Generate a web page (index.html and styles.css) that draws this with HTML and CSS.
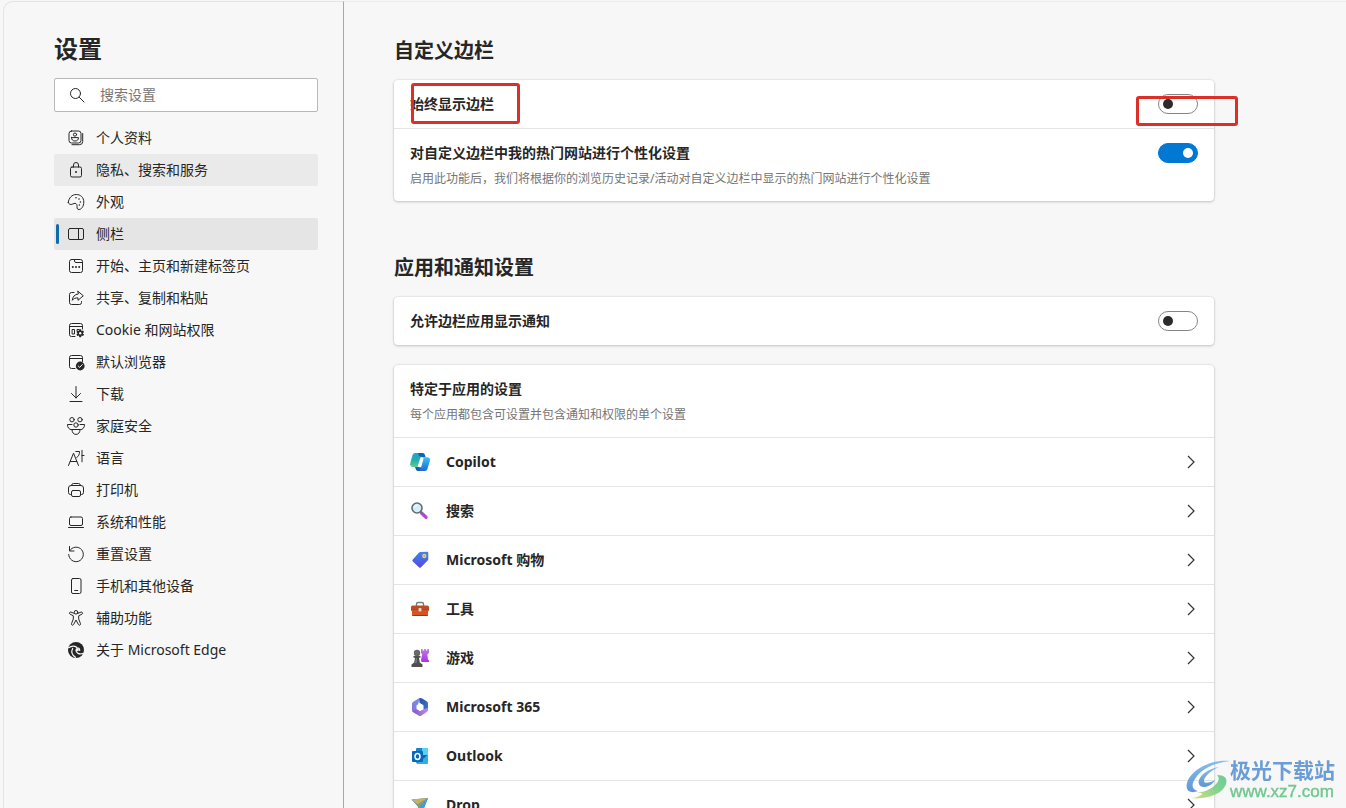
FILE: index.html
```html
<!DOCTYPE html>
<html lang="zh-CN">
<head>
<meta charset="utf-8">
<title>设置</title>
<link rel="stylesheet" href="styles.css">
</head>
<body>
<div class="shell">
  <aside class="sidebar">
    <h1 class="title">设置</h1>
    <label class="search">
      <svg class="icon" viewBox="0 0 16 16"><circle cx="6.5" cy="6.5" r="5"/><path d="M10.2 10.2 15 15"/></svg>
      <input class="search-input" type="search" placeholder="搜索设置" aria-label="搜索设置">
    </label>
    <nav class="nav">
      <a class="nav-item" href="#"><svg class="icon" viewBox="0 0 16 16"><rect x="1" y="1" width="12" height="12" rx="2.5"/><circle cx="7" cy="4.600" r="1.600"/><path d="M3.500 7.600h7c0 2.200-1.300 3.400-3.500 3.400s-3.500-1.200-3.500-3.400zM14.700 3.500v8q0 3.200-3.200 3.200H4"/></svg>个人资料</a>
      <a class="nav-item hover" href="#"><svg class="icon" viewBox="0 0 16 16"><rect x="2.500" y="5" width="11" height="10" rx="1.500"/><path d="M5.500 5V3a2.500 2.500 0 0 1 5 0v2"/><circle class="solid" cx="8" cy="10" r="1"/></svg>隐私、搜索和服务</a>
      <a class="nav-item" href="#"><svg class="icon" viewBox="0 0 16 16"><path d="M.3 8.300C.8 3.800 4 .5 8.300.5c4.300 0 7.500 3 7.500 7.500 0 4.500-2.500 7.500-4.800 7.500-2.500 0-1.900-2.300-2-4-.1-1.800-1.500-2.500-3-2-1.700.6-2.400 1.300-3.900.8C.8 9.800.3 9.200.3 8.300z"/><g class="solid"><circle cx="8" cy="3.700" r=".8"/><circle cx="11" cy="5" r=".8"/><circle cx="12.400" cy="8" r=".8"/><circle cx="11.400" cy="11" r=".8"/></g></svg>外观</a>
      <a class="nav-item active" href="#" aria-current="page"><svg class="icon" viewBox="0 0 16 16"><rect x=".5" y="2.500" width="15" height="11" rx="1.500"/><path d="M10.500 2.500v11"/></svg>侧栏</a>
      <a class="nav-item" href="#"><svg class="icon" viewBox="0 0 16 16"><rect x="1.500" y="1.500" width="13" height="13" rx="2"/><path d="M6.500 1.500v1.500q0 1.500 1.500 1.500h6.500"/><g class="solid"><circle cx="4.800" cy="9" r="1"/><circle cx="8" cy="9" r="1"/><circle cx="11.200" cy="9" r="1"/></g></svg>开始、主页和新建标签页</a>
      <a class="nav-item" href="#"><svg class="icon" viewBox="0 0 16 16"><path d="M6 2.500H3.500q-2 0-2 2v8q0 2 2 2h8q2 0 2-2V11.500"/><path d="M10 1.300 15.300 5.800 10 10.300V7.900C7.300 7.800 5.500 8.600 4.300 10.300c.3-3.500 2.300-6 5.700-6.300z"/></svg>共享、复制和粘贴</a>
      <a class="nav-item" href="#"><svg class="icon" viewBox="0 0 16 16"><path d="M7 14.500H3.500q-2 0-2-2v-9q0-2 2-2h9q2 0 2 2V7M1.500 4.500h13"/><path d="M4.500 7.500h2v4.500h-2zM9 8.500v-1h2"/><path class="solid" d="M11.300 7.300h1.800l.4 1.700 1.600-.5.900 1.500-1.200 1.200 1.200 1.200-.9 1.600-1.600-.5-.4 1.700h-1.800l-.4-1.700-1.600.5-.9-1.600 1.200-1.200-1.200-1.200.9-1.500 1.600.5z"/><circle class="knockout" cx="12.200" cy="11.300" r="1.200"/></svg>Cookie 和网站权限</a>
      <a class="nav-item" href="#"><svg class="icon" viewBox="0 0 16 16"><path d="M7 14.500H3.500q-2 0-2-2v-9q0-2 2-2h9q2 0 2 2V7.500M1.500 4.500h13"/><circle class="solid" cx="12.200" cy="12" r="4.400"/><path class="knockline" d="m10.200 12 1.500 1.400 2.600-2.800"/></svg>默认浏览器</a>
      <a class="nav-item" href="#"><svg class="icon" viewBox="0 0 16 16"><path d="M8 .5v11.500M3.500 7.500 8 12l4.500-4.500M2 15.500h12"/></svg>下载</a>
      <a class="nav-item" href="#"><svg class="icon wide" viewBox="0 0 18 18"><circle cx="5" cy="2.700" r="2.200"/><circle cx="13" cy="2.700" r="2.200"/><circle cx="9" cy="8" r="2.200"/><path d="M4.500 12.700C2 12.500.5 10.700.5 7.500h4.500M13.500 12.700c2.500-.2 4-2 4-5.200H13M5 12.500h8c0 3-1.500 4.900-4 4.900s-4-1.900-4-4.900z"/></svg>家庭安全</a>
      <a class="nav-item" href="#"><svg class="icon" viewBox="0 0 16 16"><path d="M.5 15.500 5.500 3.200l5 12.300M2.300 11.500h6.500M7.800 1.500h3.700c0 3-.8 4.700-2.800 6M14 .3v11.500M14 5.500h2"/></svg>语言</a>
      <a class="nav-item" href="#"><svg class="icon" viewBox="0 0 16 16"><path d="M3.500 3.500q0-2 2-2h5q2 0 2 2M3.500 12.500h-1q-2 0-2-2V6q0-2.500 2.500-2.500h10q2.500 0 2.500 2.500v4.500q0 2-2 2h-1"/><rect x="3.500" y="8.500" width="9" height="6" rx="1.500"/></svg>打印机</a>
      <a class="nav-item" href="#"><svg class="icon" viewBox="0 0 16 16"><rect x="1.500" y="3" width="13" height="8.500" rx="1.500"/><path d="M.5 13.500h15"/></svg>系统和性能</a>
      <a class="nav-item" href="#"><svg class="icon" viewBox="0 0 16 16"><path d="M1.500.5v4.500H6M1.700 4.700A7.300 7.300 0 1 1 .7 8.500"/></svg>重置设置</a>
      <a class="nav-item" href="#"><svg class="icon" viewBox="0 0 16 16"><rect x="3.500" y=".5" width="9.500" height="15" rx="1.500"/><path d="M6.700 12.500h3"/></svg>手机和其他设备</a>
      <a class="nav-item" href="#"><svg class="icon" viewBox="0 0 16 16"><circle cx="8" cy="2.300" r="1.800"/><path d="M6.300 3.500 3 2.100c-1.400-.5-2.200 1.300-1 2L5.300 5.800V9L3.500 13.700c-.4 1.500 1.500 2.100 2.100.8L8 10l2.400 4.500c.6 1.300 2.500.7 2.100-.8L10.700 9V5.800L14 4.100c1.200-.7.4-2.500-1-2L9.700 3.500"/></svg>辅助功能</a>
      <a class="nav-item" href="#"><svg class="icon" viewBox="0 0 16 16"><circle class="solid" cx="8" cy="8" r="8"/><path class="swirl" d="M.5 5.700C3.500 3.700 6.500 3.700 8.700 5.200M4.700 6.500C3 9.500 4 13 7.500 15.300M8.500 5.800c2-.3 3.200.8 3.200 2.600M8 8c-.3 3 3.200 5 7.300 3.200"/><circle class="knockout" cx="9.300" cy="7.700" r="1.600"/></svg>关于 Microsoft Edge</a>
    </nav>
  </aside>

  <main class="main">
    <section class="section">
      <h2 class="heading">自定义边栏</h2>
      <div class="card">
        <div class="row marked">
          <label class="row-title" for="always">始终显示边栏</label>
          <input class="switch" id="always" type="checkbox" role="switch">
          <span class="mark mark-label"></span>
          <span class="mark mark-switch"></span>
        </div>
        <div class="row">
          <div class="row-text">
            <label class="row-title" for="personal">对自定义边栏中我的热门网站进行个性化设置</label>
            <p class="desc">启用此功能后，我们将根据你的浏览历史记录/活动对自定义边栏中显示的热门网站进行个性化设置</p>
          </div>
          <input class="switch" id="personal" type="checkbox" role="switch" checked>
        </div>
      </div>
    </section>

    <section class="section">
      <h2 class="heading">应用和通知设置</h2>
      <div class="card">
        <div class="row">
          <label class="row-title" for="notify">允许边栏应用显示通知</label>
          <input class="switch" id="notify" type="checkbox" role="switch">
        </div>
      </div>
      <div class="card">
        <div class="row">
          <div class="row-text">
            <h3 class="row-title">特定于应用的设置</h3>
            <p class="desc">每个应用都包含可设置并包含通知和权限的单个设置</p>
          </div>
        </div>
        <a class="row app" href="#">
          <svg class="app-icon" viewBox="0 0 20 20"><defs><linearGradient id="c1" x1="0" y1="0" x2="0" y2="1"><stop offset="0" stop-color="#2a9fd8"/><stop offset=".5" stop-color="#1fb0a8"/><stop offset="1" stop-color="#5fd08a"/></linearGradient><linearGradient id="c2" x1="0" y1="0" x2="0" y2="1"><stop offset="0" stop-color="#36c5ee"/><stop offset="1" stop-color="#1c68dc"/></linearGradient></defs><path fill="url(#c1)" d="M5.500 1h7.200L9.300 13c-.5 1.400-1.200 2-2.600 2H3C.8 15-.2 13.500.3 11.300L2.400 3.500C2.900 1.800 3.800 1 5.500 1z"/><path fill="#1261ba" d="M8 1h4.500c1.500 0 2 .8 2.500 2.300l.6 2h-3.300L9 4zM5 15h3l4 .5-1.800 3.500H8.500c-1.600 0-2.300-.6-2.700-1.800z"/><path fill="url(#c2)" d="M13 5.200h4.200c2.200 0 3.200 1.500 2.600 3.700l-2.200 7.600c-.5 1.700-1.400 2.500-3.100 2.500H8.800c1-.3 1.500-1 1.900-2.300l2.600-9.200c.3-1-.1-1.600-.3-2.300z"/><path fill="#fff" d="M10.500 5.400h2.300L9.700 14.800H7.500z"/></svg>
          <span class="app-name">Copilot</span><svg class="chevron" viewBox="0 0 8 14"><path d="m1 1 6 6-6 6"/></svg></a>
        <a class="row app" href="#">
          <svg class="app-icon" viewBox="0 0 20 20"><path d="m11.500 12 4.500 4.300" stroke="#b844d4" stroke-width="3.300" stroke-linecap="round"/><path d="m10.200 10.500 2 2" stroke="#70757a" stroke-width="2"/><circle cx="7" cy="7" r="5" fill="#d5ecf9" stroke="#626b72" stroke-width="1.600"/><path d="M4.500 6.500a3 3 0 0 1 2.500-2" fill="none" stroke="#fff"/></svg>
          <span class="app-name">搜索</span><svg class="chevron" viewBox="0 0 8 14"><path d="m1 1 6 6-6 6"/></svg></a>
        <a class="row app" href="#">
          <svg class="app-icon" viewBox="0 0 20 20"><defs><linearGradient id="t1" x1="0" y1="0" x2="0" y2="1"><stop offset="0" stop-color="#3f86e5"/><stop offset="1" stop-color="#5546e8"/></linearGradient></defs><path fill="url(#t1)" d="m10.500 2 6.500-.2q1.300 0 1.300 1.300V9q0 .8-.6 1.400L11 17.200q-1 1-2 0L2.800 11.500q-1-1 0-2l6.300-7q.5-.5 1.400-.5z"/><circle cx="14.300" cy="6" r="2.200" fill="#e6ce84"/><circle cx="14.300" cy="6" r=".8" fill="#9d9a78"/></svg>
          <span class="app-name">Microsoft 购物</span><svg class="chevron" viewBox="0 0 8 14"><path d="m1 1 6 6-6 6"/></svg></a>
        <a class="row app" href="#">
          <svg class="app-icon" viewBox="0 0 20 20"><path d="M6.500 7V5q0-1.500 1.500-1.500h4q1.500 0 1.500 1.500v2" fill="none" stroke="#777c80" stroke-width="1.400"/><path fill="#c04a20" d="M2.500 6.500h15q1.500 0 1.500 1.500v3.500H1V8q0-1.500 1.500-1.500z"/><path fill="#d9531f" d="M2 11.500h16V16q0 1-1 1H3q-1 0-1-1z"/><path fill="#9c3512" d="M1 10.700h18v.8H1zM2.500 16h15v1h-15z"/><rect x="8.500" y="9" width="3" height="3.500" rx="1" fill="#e8d5cb"/></svg>
          <span class="app-name">工具</span><svg class="chevron" viewBox="0 0 8 14"><path d="m1 1 6 6-6 6"/></svg></a>
        <a class="row app" href="#">
          <svg class="app-icon" viewBox="0 0 20 20"><defs><linearGradient id="g1" x1="0" y1="0" x2="0" y2="1"><stop offset="0" stop-color="#c07be0"/><stop offset="1" stop-color="#ad2fe8"/></linearGradient></defs><path fill="url(#g1)" d="M11 1h1.600v1.500h1.500V1h1.700v1.500h1.500V1H19v4l-1.700 1.300.7 5.200 1 1V14h-7.500l-.5-2 1.200-5.700L11 5z"/><circle cx="7" cy="5" r="3.200" fill="#666668"/><path fill="#4f4f51" d="M3.500 8h7v1.700H9l.8 4.800 2.700 2V19h-11v-2.500l2.700-2L5 9.700H3.500z"/><path fill="#77777a" d="M5.200 4.500 6.500 3.300v2zM5.800 10h1.300l-.3 5H5z"/></svg>
          <span class="app-name">游戏</span><svg class="chevron" viewBox="0 0 8 14"><path d="m1 1 6 6-6 6"/></svg></a>
        <a class="row app" href="#">
          <svg class="app-icon" viewBox="0 0 20 20"><defs><linearGradient id="m1" x1="1" y1="0" x2="0" y2="1"><stop offset="0" stop-color="#6d9be8"/><stop offset="1" stop-color="#8a72d8"/></linearGradient><linearGradient id="m2" x1="0" y1="0" x2="1" y2="1"><stop offset="0" stop-color="#2f4fa0"/><stop offset="1" stop-color="#3f78d0"/></linearGradient><linearGradient id="m3" x1="0" y1="0" x2="1" y2="0"><stop offset="0" stop-color="#7a58c4"/><stop offset="1" stop-color="#c48ae6"/></linearGradient></defs><path fill="url(#m1)" d="M11.500 1 9.300 3.200 8 7.500l-1.300 1v5.300L2.800 15Q2 14.300 2 13V7q0-1.500 1.300-2.300L8.500 1.500Q9.800.9 11.500 1z"/><path fill="url(#m2)" d="M9.300 1.200q1.500-.5 2.900.3l4.500 2.800Q18 5.200 18 6.800v6q0 1-1 1.500l-3.700-2.400V8.300L9.500 6z"/><path fill="url(#m3)" d="M2.500 13.500q.5.500 1.500 0l3-1.600 3.300 2.100 3-1.800L17.800 11v2q0 1.500-1.300 2.300L11.500 18.400q-1.500 1-3 0l-5-3q-1-.7-1-1.900z"/><path fill="#fff" d="m10 6.200 3.300 2v3.700L10 14l-3.300-2V8.300z"/></svg>
          <span class="app-name">Microsoft 365</span><svg class="chevron" viewBox="0 0 8 14"><path d="m1 1 6 6-6 6"/></svg></a>
        <a class="row app" href="#">
          <svg class="app-icon" viewBox="0 0 20 20"><rect x="6" y="2" width="12" height="15" rx="1" fill="#1684cf"/><path fill="#35b8ee" d="M6 6h6v5H6z"/><path fill="#5ad2f8" d="M12 2h5q1 0 1 1v8l-6-1z"/><path fill="#1262ad" d="M12 9h6l-6 4z"/><path fill="#35aee7" d="m18 9.500V17q0 1-1 1H6z"/><rect x="2" y="5" width="11" height="11" rx="1" fill="#0869b7"/><ellipse cx="7.500" cy="10.500" rx="2.500" ry="2.900" fill="none" stroke="#fff" stroke-width="1.500"/></svg>
          <span class="app-name">Outlook</span><svg class="chevron" viewBox="0 0 8 14"><path d="m1 1 6 6-6 6"/></svg></a>
        <a class="row app" href="#">
          <svg class="app-icon" viewBox="0 0 20 20"><path fill="#2e87dc" d="M1.500 4.500 18 3l-6 15-3.500-6z"/><path fill="#ccb15b" d="M1.500 4.500 18 3 7.500 9.500z"/><path fill="#8a9f68" d="M18 3 7.500 9.500l1 6z"/><path fill="#3f9ae8" d="m18 3-6 15-2.700-6z"/></svg>
          <span class="app-name">Drop</span><svg class="chevron" viewBox="0 0 8 14"><path d="m1 1 6 6-6 6"/></svg></a>
      </div>
    </section>
  </main>
</div>

<div class="watermark">
  <svg class="wm-logo" viewBox="0 0 44 40"><defs><linearGradient id="w1" x1="0" y1="0" x2="0" y2="1"><stop offset="0" stop-color="#76b9e8"/><stop offset="1" stop-color="#4e8bd0"/></linearGradient><linearGradient id="w2" x1="0" y1="1" x2="1" y2="0"><stop offset="0" stop-color="#d0dc70"/><stop offset=".6" stop-color="#6fce85"/><stop offset="1" stop-color="#62c48c"/></linearGradient></defs><path fill="url(#w1)" d="M44 1C24-1 5 10 1 23c-2 8 4 11 11 8-6-1-7-6-3-12C14 10 26 3 44 1z"/><path fill="url(#w1)" d="M33 7C20 9 11 18 13 24c1 5 12 4 16-4-5 3-11 4-11 1 0-5 8-11 15-14z"/><path fill="url(#w2)" d="M5 38c15 2 32-4 35-14 2-6-2-9-9-9 3 3 2 7-3 11-6 5-12 6-17 7 5 0 7 1 4 2-3 2-6 3-10 3z"/></svg>
  <div class="wm-text"><span class="wm-name">极光下载站</span><span class="wm-url">www.xz7.com</span></div>
</div>
</body>
</html>
```

FILE: styles.css
```css
* { box-sizing: border-box; }

body {
  margin: 0;
  background: #f7f7f7;
  color: #262626;
  font: 14px/20px "Noto Sans", "Noto Sans CJK SC", sans-serif;
}

h1, h2, h3, p { margin: 0; }
a { color: inherit; text-decoration: none; }

.shell {
  display: flex;
  height: 100vh;
  overflow: hidden;
  padding: 1px 0 0 3px;
}

.sidebar {
  flex: 0 0 341px;
  padding: 31px 25px 0 50px;
  border: 1px solid #e4e4e4;
  border-right-color: #a8a8a8;
  border-bottom: 0;
  border-top-left-radius: 10px;
}

.title {
  margin-bottom: 13px;
  font-size: 24px;
  line-height: 32px;
}

.search {
  display: flex;
  align-items: center;
  gap: 15px;
  height: 34px;
  padding: 0 14px;
  border: 1px solid #b8b8b8;
  border-radius: 2px;
  background: #fff;
}

.search-input {
  flex: 1;
  min-width: 0;
  padding: 0;
  border: 0;
  outline: 0;
  background: none;
  color: inherit;
  font: inherit;
}

.search-input::placeholder { color: #767676; }

.nav { margin-top: 10px; }

.nav-item {
  display: flex;
  align-items: center;
  gap: 12px;
  height: 32px;
  padding: 0 14px;
  border-radius: 2px;
  white-space: nowrap;
}

.nav-item.hover { background: #eaeaea; }

.nav-item.active {
  position: relative;
  background: #e5e5e5;
}

.nav-item.active::before {
  content: "";
  position: absolute;
  left: 2px;
  top: 6px;
  bottom: 6px;
  width: 3px;
  border-radius: 2px;
  background: #0f6cab;
}

.icon {
  flex: none;
  width: 16px;
  height: 16px;
  overflow: visible;
  fill: none;
  stroke: #262626;
  stroke-linecap: round;
  stroke-linejoin: round;
}

.icon.wide {
  width: 18px;
  height: 18px;
  margin: 0 -1px;
}

.solid { fill: #262626; stroke: none; }
.knockout { fill: #f7f7f7; stroke: none; }
.knockline { stroke: #f7f7f7; }
.swirl { stroke: #f7f7f7; stroke-width: 1.2; }

.main {
  flex: 1;
  min-width: 0;
  padding: 35px 50px 0;
  border-top: 1px solid #ececec;
}

.section { max-width: 820px; margin-bottom: 53px; }

.heading {
  margin-bottom: 15px;
  font-size: 20px;
  line-height: 28px;
}

.card {
  border-radius: 4px;
  background: #fff;
  box-shadow: 0 0 2px rgba(0, 0, 0, .16), 0 1px 3px rgba(0, 0, 0, .18);
}

.card + .card { margin-top: 20px; }

.row {
  display: flex;
  align-items: flex-start;
  justify-content: space-between;
  gap: 16px;
  padding: 14px 16px;
}

.row + .row { border-top: 1px solid #e6e6e6; }

.row-title {
  display: block;
  font-size: 14px;
  font-weight: 600;
  line-height: 20px;
}

.desc {
  margin-top: 8px;
  color: #757575;
  font-size: 12px;
  line-height: 16px;
}

.switch {
  appearance: none;
  display: flex;
  align-items: center;
  width: 40px;
  height: 20px;
  margin: 0;
  padding: 0 4px;
  border: 1px solid #858585;
  border-radius: 10px;
  background: #fff;
}

.switch::before {
  content: "";
  width: 10px;
  height: 10px;
  border-radius: 50%;
  background: #2b2b2b;
}

.switch:checked {
  justify-content: flex-end;
  border-color: #0078d4;
  background: #0078d4;
}

.switch:checked::before { background: #fff; }

.marked { position: relative; }

.mark {
  position: absolute;
  border: 3px solid #dc2f28;
  border-radius: 3px;
  pointer-events: none;
}

.mark-label {
  left: 17px;
  top: 3px;
  width: 109px;
  height: 41px;
}

.mark-switch {
  right: -24px;
  top: 16px;
  width: 102px;
  height: 30px;
}

.app { align-items: center; }
.app-icon { flex: none; width: 20px; height: 20px; }

.app-name {
  flex: 1;
  font-weight: 700;
}

.chevron {
  width: 8px;
  height: 14px;
  margin-right: 3px;
  fill: none;
  stroke: #333;
  stroke-width: 1.2;
}

.watermark {
  position: fixed;
  right: 11px;
  bottom: 7px;
  display: flex;
  align-items: center;
  opacity: .9;
}

.wm-logo { width: 44px; height: 40px; }

.wm-text {
  display: flex;
  flex-direction: column;
  gap: 1px;
}

.wm-name {
  color: #5b94d2;
  font-size: 21px;
  font-weight: 700;
  line-height: 24px;
}

.wm-url {
  color: #60c383;
  font: 17px/18px "Liberation Sans", sans-serif;
  -webkit-text-stroke: 0.4px #60c383;
}
```
